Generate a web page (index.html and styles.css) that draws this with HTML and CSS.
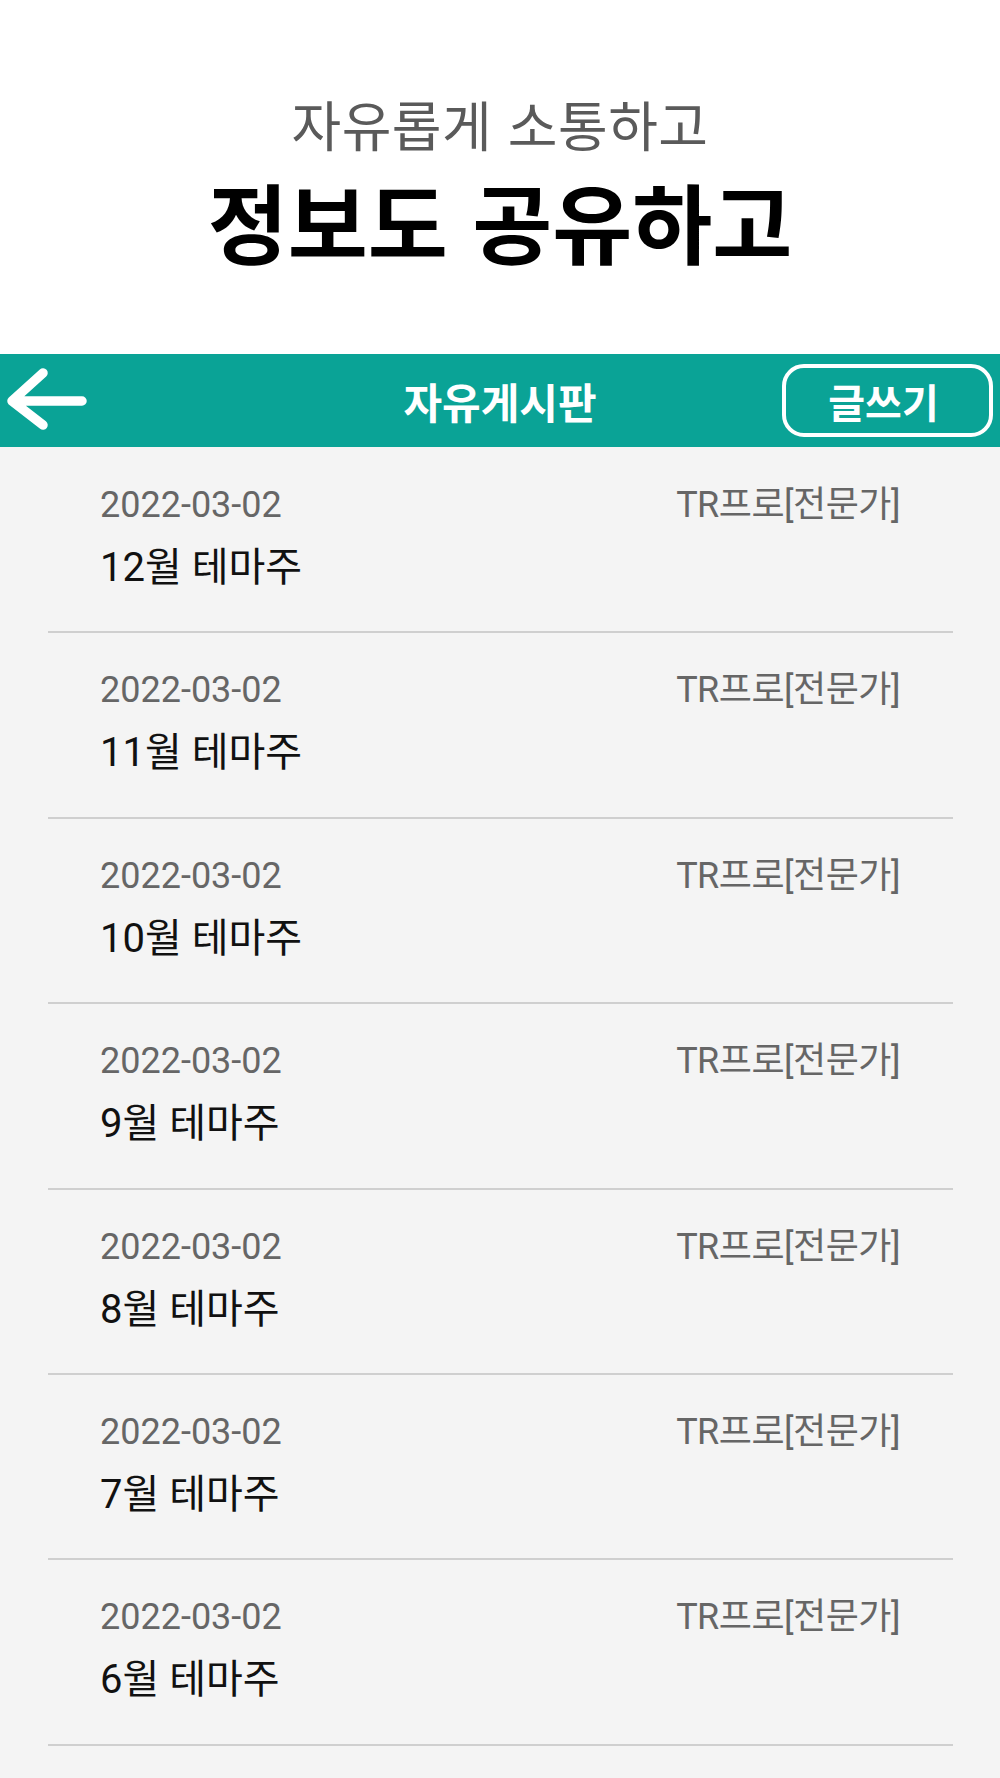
FILE: index.html
```html
<!DOCTYPE html>
<html lang="ko">
<head>
<meta charset="utf-8">
<title>자유게시판</title>
<link rel="stylesheet" href="styles.css">
</head>
<body>
<header class="hero">
  <p class="hero-sub">자유롭게 소통하고</p>
  <h1 class="hero-title">정보도 공유하고</h1>
</header>
<nav class="topbar">
  <div class="topbar-left">
    <svg class="back-icon" width="90" height="93" viewBox="0 0 90 93" aria-hidden="true">
      <path d="M43 19 L12 47 L43 71 M12 47 H82" fill="none" stroke="#fff" stroke-width="9.5" stroke-linecap="round" stroke-linejoin="round"/>
    </svg>
  </div>
  <div class="topbar-title">자유게시판</div>
  <div class="topbar-right">
    <button class="write-btn">글쓰기</button>
  </div>
</nav>
<main class="board">
  <ul class="post-list">
    <li class="post"><div class="post-meta"><span class="post-date">2022-03-02</span><span class="post-author">TR프로[전문가]</span></div><div class="post-title">12월 테마주</div></li>
    <li class="post"><div class="post-meta"><span class="post-date">2022-03-02</span><span class="post-author">TR프로[전문가]</span></div><div class="post-title">11월 테마주</div></li>
    <li class="post"><div class="post-meta"><span class="post-date">2022-03-02</span><span class="post-author">TR프로[전문가]</span></div><div class="post-title">10월 테마주</div></li>
    <li class="post"><div class="post-meta"><span class="post-date">2022-03-02</span><span class="post-author">TR프로[전문가]</span></div><div class="post-title">9월 테마주</div></li>
    <li class="post"><div class="post-meta"><span class="post-date">2022-03-02</span><span class="post-author">TR프로[전문가]</span></div><div class="post-title">8월 테마주</div></li>
    <li class="post"><div class="post-meta"><span class="post-date">2022-03-02</span><span class="post-author">TR프로[전문가]</span></div><div class="post-title">7월 테마주</div></li>
    <li class="post"><div class="post-meta"><span class="post-date">2022-03-02</span><span class="post-author">TR프로[전문가]</span></div><div class="post-title">6월 테마주</div></li>
  </ul>
</main>
</body>
</html>
```
FILE: styles.css
```css
* { box-sizing: border-box; }
html, body {
  margin: 0;
  padding: 0;
  background: #f4f4f4;
}
body {
  width: 1000px;
  min-height: 1778px;
  font-family: Roboto, "Noto Sans CJK KR", sans-serif;
}
.hero {
  background: #ffffff;
  height: 354px;
  display: flex;
  flex-direction: column;
  align-items: center;
  padding-top: 97px;
}
.hero-sub {
  margin: 0;
  font-family: "Noto Sans CJK KR", sans-serif;
  font-size: 54px;
  line-height: 1;
  font-weight: 400;
  color: #5a5a5a;
  letter-spacing: 0.5px;
}
.hero-title {
  margin: 26px 0 0;
  font-family: "Noto Sans CJK KR", sans-serif;
  font-size: 87px;
  line-height: 1;
  font-weight: 700;
  color: #000;
  letter-spacing: 0;
}
.topbar {
  height: 93px;
  background: #0aa396;
  display: grid;
  grid-template-columns: 1fr auto 1fr;
  align-items: center;
}
.topbar-left { display: flex; align-items: center; }
.back-icon { display: block; }
.topbar-title {
  font-family: "Noto Sans CJK KR", sans-serif;
  font-size: 42px;
  font-weight: 700;
  color: #fff;
  letter-spacing: 0;
  line-height: 1;
}
.topbar-right {
  display: flex;
  justify-content: flex-end;
  padding-right: 7px;
}
.write-btn {
  width: 211px;
  height: 73px;
  border: 4px solid #fff;
  border-radius: 22px;
  background: transparent;
  color: #fff;
  font-family: "Noto Sans CJK KR", sans-serif;
  font-size: 40px;
  font-weight: 700;
  letter-spacing: 0;
  line-height: 1;
  padding: 0 8px 0 0;
}
.board {
  padding: 0 47px 0 48px;
}
.post-list {
  list-style: none;
  margin: 0;
  padding: 1px 0 0;
}
.post {
  height: 185.4px;
  border-bottom: 2px solid #cfcfcf;
  padding: 37px 53px 0 52px;
}
.post-meta {
  display: flex;
  justify-content: space-between;
  align-items: baseline;
  font-size: 36px;
  line-height: 40px;
  color: #666;
}
.post-date { letter-spacing: 0; }
.post-author { letter-spacing: -0.5px; }
.post-title {
  margin-top: 20px;
  font-size: 40px;
  line-height: 46px;
  color: #111;
  letter-spacing: 0;
}
```
